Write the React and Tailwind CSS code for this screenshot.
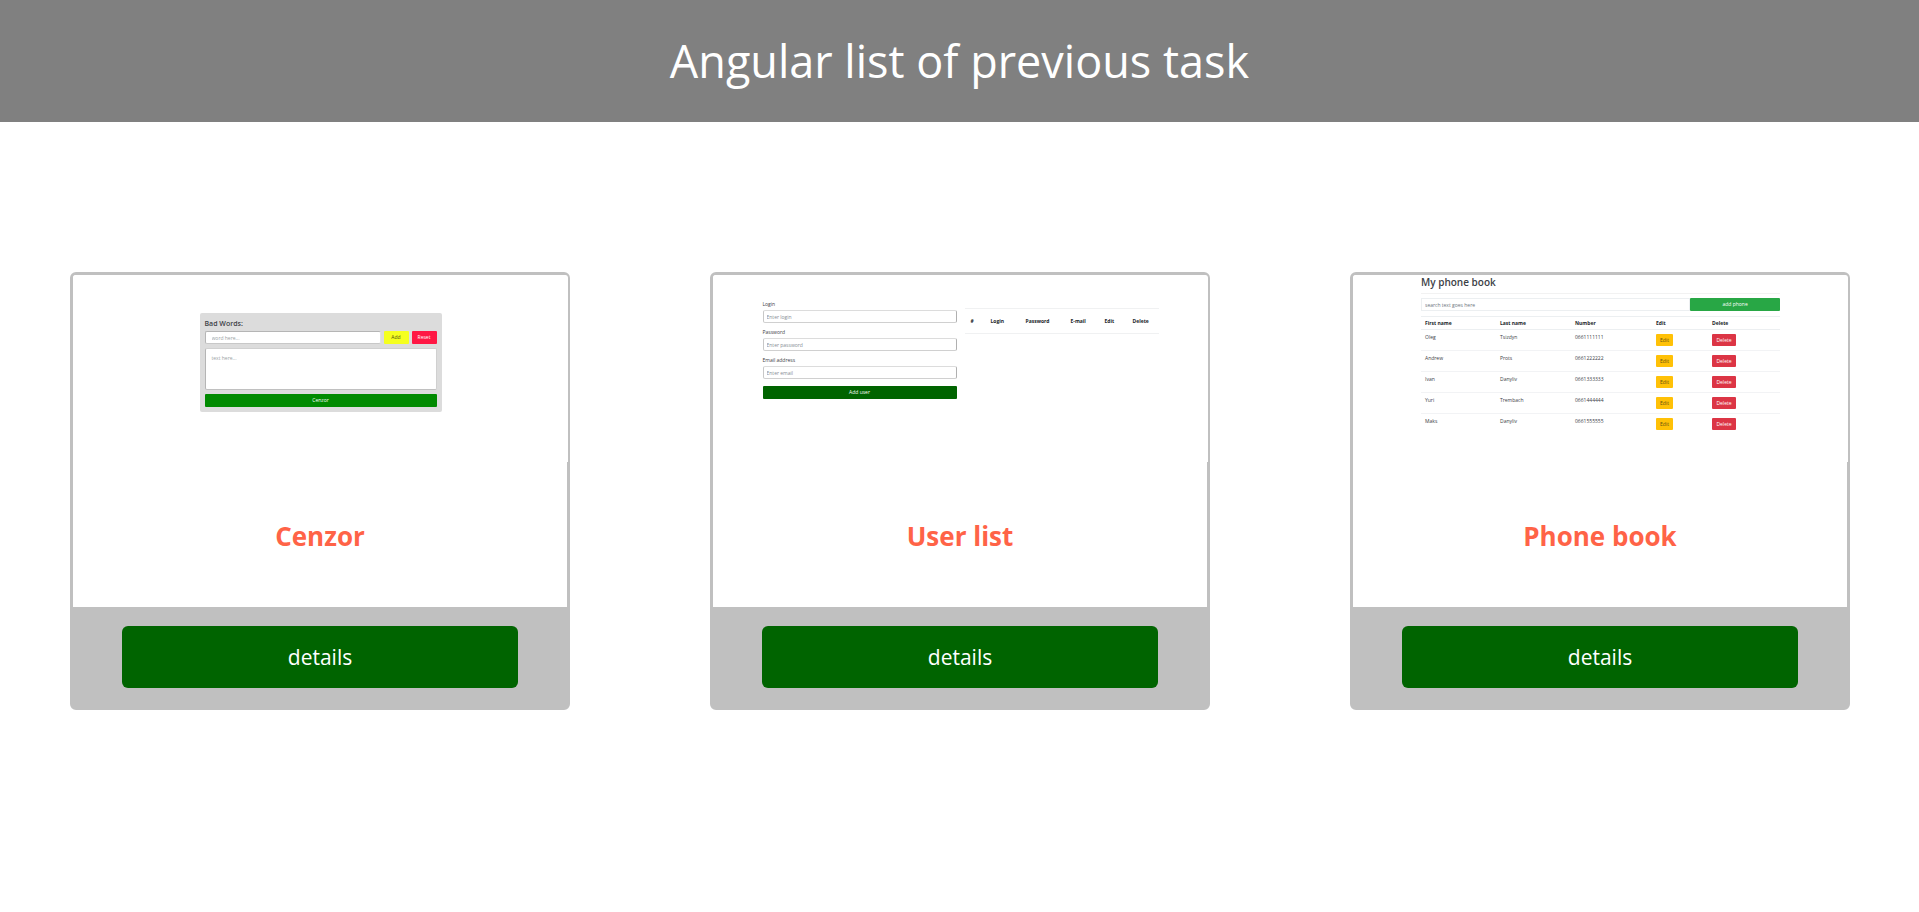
const CARD_BUTTON =
  "h-[62px] w-4/5 cursor-pointer rounded-md bg-[#006400] pb-px text-[21px] leading-8 text-white";

function CenzorPreview() {
  return (
    <div className="flex h-full flex-col items-center pt-[38px]">
      <div className="flex w-[242px] flex-col gap-1 rounded-[2px] bg-[#dcdcdc] p-[5px]">
        <div>
          <h3 className="mb-[2px] h-[11px] text-[7px] leading-[11px] font-semibold text-[#3c4146]">
            Bad Words:
          </h3>
          <div className="flex gap-[3px]">
            <input
              aria-label="Bad word"
              placeholder="word here..."
              className="h-[13px] min-w-0 flex-1 rounded-[2px] border border-t-[#b5b5b5] border-r-[#e2e2e2] border-b-[#c8c8c8] border-l-[#b5b5b5] bg-white px-[6px] text-[5px] placeholder:text-[#9a9fa4]"
            />
            <button className="h-[13px] w-[25px] rounded-[1px] bg-[#f5ff1f] text-[5px] text-[#4a4d10]">
              Add
            </button>
            <button className="h-[13px] w-[25px] rounded-[1px] bg-[#ff1744] text-[5px] text-white">
              Reset
            </button>
          </div>
        </div>
        <textarea
          aria-label="Text to check"
          placeholder="text here..."
          className="block h-[42px] resize-none rounded-[2px] border border-t-[#d0d0d0] border-r-[#d0d0d0] border-b-[#c0c0c0] border-l-[#b5b5b5] bg-white px-[6px] py-[5px] text-[5px] leading-[8px] placeholder:text-[#9a9fa4]"
        />
        <button className="h-[13px] rounded-[1px] bg-[#008a00] text-[5px] text-white">Cenzor</button>
      </div>
    </div>
  );
}

const USER_FIELDS = [
  { id: "user-login", label: "Login", hint: "Enter login" },
  { id: "user-password", label: "Password", hint: "Enter password" },
  { id: "user-email", label: "Email address", hint: "Enter email" },
];

function UserListPreview() {
  return (
    <div className="mx-auto flex w-4/5 items-start gap-2 pt-[25px]">
      <form className="flex flex-1 flex-col gap-[5px]" onSubmit={(e) => e.preventDefault()}>
        {USER_FIELDS.map((f) => (
          <div key={f.id} className="flex flex-col gap-[2px]">
            <label htmlFor={f.id} className="text-[5px] leading-[8px] text-[#3c4146]">
              {f.label}
            </label>
            <input
              id={f.id}
              placeholder={f.hint}
              className="h-[13px] w-full rounded-[2px] border border-t-[#dcdcdc] border-r-[#b0b0b0] border-b-[#d0d0d0] border-l-[#c8c8c8] px-[3px] text-[5px] placeholder:text-[#868d94]"
            />
          </div>
        ))}
        <button className="mt-[2px] h-[13px] rounded-[1px] bg-[#006400] text-[5px] text-white">
          Add user
        </button>
      </form>
      <table className="mt-2 flex-1 table-fixed border-y border-[#f0f1f2] text-left text-[5px] text-[#212529]">
        <thead>
          <tr className="h-[25px]">
            <th className="w-[20px] pt-px pl-[6px]">#</th>
            <th className="w-[35px] pt-px pl-[6px]">Login</th>
            <th className="w-[45px] pt-px pl-[6px]">Password</th>
            <th className="w-[34px] pt-px pl-[6px]">E-mail</th>
            <th className="w-[28px] pt-px pl-[6px]">Edit</th>
            <th className="pt-px pl-[6px]">Delete</th>
          </tr>
        </thead>
      </table>
    </div>
  );
}

const CONTACTS = [
  ["Oleg", "Tsizdyn", "0661111111"],
  ["Andrew", "Prots", "0661222222"],
  ["Ivan", "Danyliv", "0661333333"],
  ["Yuri", "Trembach", "0661444444"],
  ["Maks", "Danyliv", "0661555555"],
];

function PhoneBookPreview() {
  return (
    <div className="mx-auto w-[359px] text-[#3c4146]">
      <h3 className="h-[14px] text-[10px] leading-[14px] font-semibold">My phone book</h3>
      <hr className="mt-1 mb-1 border-[#f2f2f2]" />
      <div className="mb-[5px] flex">
        <input
          aria-label="Search contacts"
          placeholder="search text goes here"
          className="h-[13px] flex-1 border border-[#eceff1] px-[3px] text-[5px] placeholder:text-[#6c757d]"
        />
        <button className="h-[13px] w-1/4 rounded-[1px] bg-[#28a745] text-[5px] text-white">
          add phone
        </button>
      </div>
      <table className="w-full table-fixed text-left text-[5px] leading-[8px]">
        <thead>
          <tr className="h-[13px] border-y border-[#eceff1] text-[#212529]">
            <th className="w-[75px] pl-1">First name</th>
            <th className="w-[75px] pl-1">Last name</th>
            <th className="w-[81px] pl-1">Number</th>
            <th className="w-[56px] pl-1">Edit</th>
            <th className="pl-1">Delete</th>
          </tr>
        </thead>
        <tbody>
          {CONTACTS.map(([first, last, phone]) => (
            <tr key={phone} className="h-[21px] border-t border-[#f2f3f5] align-top">
              <td className="pt-[3px] pl-1">{first}</td>
              <td className="pt-[3px] pl-1">{last}</td>
              <td className="pt-[3px] pl-1">{phone}</td>
              <td className="pt-1 pl-1">
                <button className="block h-3 w-[17px] rounded-[1px] bg-[#ffc107] text-[#5f4c10]">
                  Edit
                </button>
              </td>
              <td className="pt-1 pl-1">
                <button className="block h-3 w-6 rounded-[1px] bg-[#dc3545] text-white">Delete</button>
              </td>
            </tr>
          ))}
        </tbody>
      </table>
    </div>
  );
}

function TaskCard({ title, children }) {
  return (
    <article className="rounded-md border-[3px] border-[#c0c0c0] bg-[#c0c0c0]">
      <div className="rounded-t-[3px] bg-white">
        <div className="-mr-px h-[187px] overflow-hidden rounded-t-[3px] bg-white">{children}</div>
        <h2 className="flex h-[145px] items-center justify-center pt-[2px] text-[26px] leading-10 font-bold text-[#ff6347]">
          {title}
        </h2>
      </div>
      <div className="flex justify-center pt-[19px] pb-[19px]">
        <button className={CARD_BUTTON}>details</button>
      </div>
    </article>
  );
}

export default function App() {
  return (
    <div className="min-h-screen bg-white font-['Open_Sans','Noto_Sans',sans-serif]">
      <header className="bg-[#808080] py-[25px] text-center">
        <h1 className="text-[45px] leading-[72px] text-white">Angular list of previous task</h1>
      </header>
      <main className="grid grid-cols-3 gap-[140px] pt-[150px] pr-[69px] pl-[70px]">
        <TaskCard title="Cenzor">
          <CenzorPreview />
        </TaskCard>
        <TaskCard title="User list">
          <UserListPreview />
        </TaskCard>
        <TaskCard title="Phone book">
          <PhoneBookPreview />
        </TaskCard>
      </main>
    </div>
  );
}
